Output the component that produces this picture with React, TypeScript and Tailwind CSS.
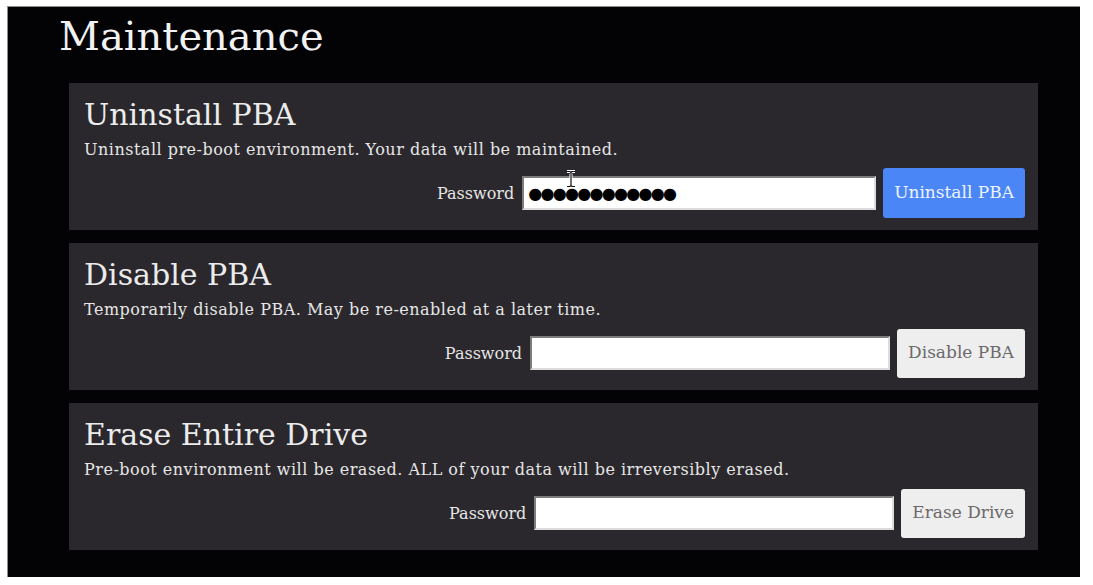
import React from 'react';

type Section = {
  title: string;
  description: string;
  action: string;
  primary?: boolean;
  filled?: boolean;
};

const sections: Section[] = [
  {
    title: 'Uninstall PBA',
    description: 'Uninstall pre-boot environment. Your data will be maintained.',
    action: 'Uninstall PBA',
    primary: true,
    filled: true,
  },
  {
    title: 'Disable PBA',
    description: 'Temporarily disable PBA. May be re-enabled at a later time.',
    action: 'Disable PBA',
  },
  {
    title: 'Erase Entire Drive',
    description: 'Pre-boot environment will be erased. ALL of your data will be irreversibly erased.',
    action: 'Erase Drive',
  },
];

const serif = { fontFamily: '"DejaVu Serif", "Liberation Serif", serif' };

// I-beam cursor drawn over the first password field
const TextCursor = () => (
  <svg
    className="absolute left-[44px] top-[-6px]"
    width="10"
    height="18"
    viewBox="0 0 10 18"
    fill="none"
  >
    <path d="M1 1.5h3l1 1 1-1h3M5 2.5v13M1 16.5h3l1-1 1 1h3" stroke="#fff" strokeWidth="3" />
    <path d="M1 1.5h3l1 1 1-1h3M5 2.5v13M1 16.5h3l1-1 1 1h3" stroke="#111" strokeWidth="1.2" />
  </svg>
);

const MaintenanceCard = ({ section }: { section: Section }) => (
  <div className="bg-[#2a282c] pt-[14px] pb-[12px] pl-[15px] pr-[13px]">
    <h2 className="text-[30px] leading-[36px] text-[#ececec]">{section.title}</h2>
    <p className="mt-[7px] text-[16px] leading-[20px] tracking-[0.5px] text-[#e6e6e6]">
      {section.description}
    </p>

    <div className="mt-[8px] flex h-[50px] items-center justify-end">
      <label className="mr-[8px] pt-[2px] text-[16px] text-[#e6e6e6]">Password</label>
      <div className="relative">
        <input
          type="text"
          readOnly
          value={section.filled ? '●●●●●●●●●●●●' : ''}
          className={
            (section.filled ? 'w-[354px] ' : 'w-[360px] ') +
            'h-[34px] border-2 border-t-[#7d7d7d] border-l-[#7d7d7d] border-b-[#dcdcdc] border-r-[#dcdcdc] bg-white px-[4px] text-[16px] tracking-[-1.7px] text-black outline-none'
          }
          style={{ fontFamily: '"DejaVu Sans", sans-serif' }}
        />
        {section.filled && <TextCursor />}
      </div>
      <button
        className={
          section.primary
            ? 'ml-[7px] h-[50px] rounded-[3px] bg-[#4a86f6] px-[11px] text-[17px] text-[#eef3ff]'
            : 'ml-[7px] h-[49px] rounded-[3px] bg-[#efeeef] px-[11px] text-[17px] text-[#6a6a6a]'
        }
      >
        {section.action}
      </button>
    </div>
  </div>
);

export default function App() {
  return (
    <div className="h-[585px] w-[1093px] bg-white" style={serif}>
      <div className="ml-[7px] pt-[6px]">
        <div className="h-[571px] w-[1073px] border-t border-l border-[#8c8c8c] bg-[#030205] pt-[7px] pl-[51px] pr-[42px]">
          <h1 className="text-[40px] leading-[44px] text-[#f2f2f2]">Maintenance</h1>
          <div className="mt-[25px] ml-[10px] flex flex-col gap-[13px]">
            {sections.map((s) => (
              <MaintenanceCard key={s.title} section={s} />
            ))}
          </div>
        </div>
      </div>
    </div>
  );
}
